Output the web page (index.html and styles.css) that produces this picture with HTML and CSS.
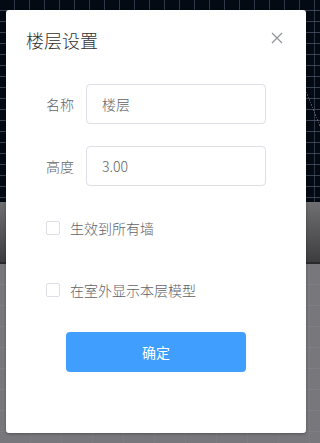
FILE: index.html
```html
<!DOCTYPE html>
<html lang="zh-CN">
<head>
    <meta charset="UTF-8">
    <meta name="viewport" content="width=device-width, initial-scale=1.0">
    <title>楼层设置</title>
    <link rel="stylesheet" href="styles.css">
</head>
<body>
    <div class="dialog">
        <div class="dialog-header">
            <span class="dialog-title">楼层设置</span>
            <button type="button" class="dialog-close" aria-label="关闭">
                <svg width="12" height="12" viewBox="0 0 12 12">
                    <path d="M1 1 L11 11 M11 1 L1 11" stroke="#909399" stroke-width="1.2" fill="none"/>
                </svg>
            </button>
        </div>
        <form class="dialog-body" id="floorForm">
            <div class="form-item">
                <label class="form-label" for="name">名称</label>
                <input class="form-input" type="text" id="name" value="楼层">
            </div>
            <div class="form-item">
                <label class="form-label" for="height">高度</label>
                <input class="form-input" type="text" id="height" value="3.00">
            </div>
            <label class="form-check">
                <span class="check-box"></span>
                <span class="check-text">生效到所有墙</span>
            </label>
            <label class="form-check">
                <span class="check-box"></span>
                <span class="check-text">在室外显示本层模型</span>
            </label>
            <div class="form-actions">
                <button type="submit" class="btn-primary">确定</button>
            </div>
        </form>
    </div>
</body>
</html>
```

FILE: styles.css
```css
html, body {
    height: 100%;
}
body {
    margin: 0;
    overflow: hidden;
    font-family: "Liberation Sans", "Noto Sans CJK SC", sans-serif;
    background:
        linear-gradient(#2a2a2c, #2a2a2c) 0 262px / 100% 2px no-repeat,
        linear-gradient(#6f6f72, #3d3d3f) 0 202px / 100% 60px no-repeat,
        linear-gradient(68deg, transparent 0 49.6%, rgba(120, 128, 140, 0.6) 49.6% 50.2%, transparent 50.2%) 300px 0 / 20px 202px no-repeat,
        repeating-linear-gradient(to bottom, transparent 0 10px, rgba(80, 92, 110, 0.7) 10px 11px) 0 0 / 100% 202px no-repeat,
        repeating-linear-gradient(to right, transparent 0 14px, rgba(80, 92, 110, 0.55) 14px 15px) 0 0 / 100% 202px no-repeat,
        linear-gradient(#040a14, #040a14) 0 0 / 100% 202px no-repeat,
        repeating-linear-gradient(to bottom, transparent 0 20px, rgba(140, 140, 148, 0.3) 20px 21px) 0 264px / 100% 100% no-repeat,
        repeating-linear-gradient(to right, transparent 0 30px, rgba(140, 140, 148, 0.2) 30px 31px) 0 264px / 100% 100% no-repeat,
        #77777c;
}
.dialog {
    width: 300px;
    height: 423px;
    margin: 10px 0 0 6px;
    background-color: #fff;
    border-radius: 3px;
    box-shadow: 0 1px 3px rgba(0, 0, 0, 0.3);
    box-sizing: border-box;
}
.dialog-header {
    display: flex;
    justify-content: space-between;
    align-items: center;
    padding: 20px 20px 10px;
}
.dialog-title {
    font-size: 18px;
    font-weight: 300;
    line-height: 24px;
    color: #303133;
}
.dialog-close {
    border: none;
    background: none;
    padding: 0;
    width: 12px;
    height: 12px;
    margin: -8px 3px 0 0;
    cursor: pointer;
    display: flex;
}
.dialog-body {
    padding: 20px 0 0;
    margin: 0;
}
.form-item {
    display: flex;
    align-items: center;
    margin-bottom: 22px;
}
.form-label {
    width: 80px;
    padding-right: 12px;
    box-sizing: border-box;
    text-align: right;
    font-size: 14px;
    font-weight: 300;
    color: #606266;
}
.form-input {
    width: 180px;
    height: 40px;
    padding: 0 15px;
    border: 1px solid #dcdfe6;
    border-radius: 4px;
    box-sizing: border-box;
    font-family: "Noto Sans CJK SC", sans-serif;
    font-size: 14px;
    font-weight: 300;
    color: #606266;
    outline: none;
}
.form-input:focus {
    border-color: #409eff;
}
.form-check {
    display: flex;
    align-items: center;
    height: 40px;
    padding-left: 40px;
    margin-bottom: 22px;
    cursor: pointer;
}
.check-box {
    width: 14px;
    height: 14px;
    border: 1px solid #dcdfe6;
    border-radius: 2px;
    box-sizing: border-box;
    background-color: #fff;
}
.check-text {
    padding-left: 10px;
    font-size: 14px;
    font-weight: 300;
    color: #606266;
}
.form-actions {
    display: flex;
    justify-content: center;
}
.btn-primary {
    width: 180px;
    height: 40px;
    border: none;
    border-radius: 4px;
    background-color: #409eff;
    color: #fff;
    font-family: inherit;
    font-size: 14px;
    cursor: pointer;
}
.btn-primary:hover {
    background-color: #66b1ff;
}
```
